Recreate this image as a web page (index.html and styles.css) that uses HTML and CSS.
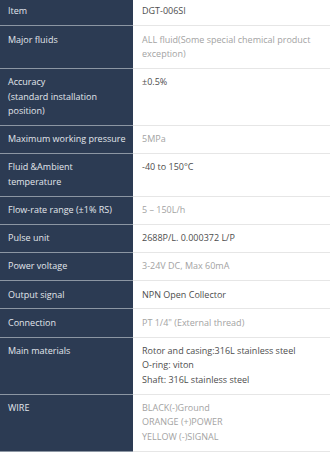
FILE: index.html
```html
<!DOCTYPE html>
<html lang="en">
<head>
<meta charset="utf-8">
<title>Spec</title>
<link rel="stylesheet" href="styles.css">
</head>
<body>
<div class="spec">
  <div class="k">Item</div><div class="v dark">DGT-006SI</div>
  <div class="k">Major fluids</div><div class="v light">ALL fluid(Some special chemical product exception)</div>
  <div class="k">Accuracy<br>(standard installation position)</div><div class="v dark">±0.5%</div>
  <div class="k">Maximum working pressure</div><div class="v light">5MPa</div>
  <div class="k">Fluid &amp;Ambient temperature</div><div class="v dark">-40 to 150°C</div>
  <div class="k">Flow-rate range (±1% RS)</div><div class="v light">5 – 150L/h</div>
  <div class="k">Pulse unit</div><div class="v dark">2688P/L. 0.000372 L/P</div>
  <div class="k">Power voltage</div><div class="v light">3-24V DC, Max 60mA</div>
  <div class="k">Output signal</div><div class="v dark">NPN Open Collector</div>
  <div class="k">Connection</div><div class="v light">PT 1/4" (External thread)</div>
  <div class="k">Main materials</div><div class="v dark">Rotor and casing:316L stainless steel<br>O-ring: viton<br>Shaft: 316L stainless steel</div>
  <div class="k">WIRE</div><div class="v light">BLACK(-)Ground<br>ORANGE (+)POWER<br>YELLOW (-)SIGNAL</div>
</div>
</body>
</html>
```
FILE: styles.css
```css
html, body {
  margin: 0;
  padding: 0;
  background: #ffffff;
}
body {
  font-family: "Open Sans", "Noto Sans", "DejaVu Sans", sans-serif;
  font-size: 9px;
  line-height: 14.4px;
  overflow: hidden;
}
.spec {
  display: grid;
  grid-template-columns: 133px 1fr;
  margin-top: -2px;
}
.k {
  background: #2c3b53;
  color: #e2e6ec;
  padding: 6.4px 6px 6.4px 8px;
  border-bottom: 1px solid #8c96a3;
}
.v {
  padding: 6.4px 8px 6.4px 9px;
  border-bottom: 1px solid #e6e6e6;
}
.dark { color: #4d4d4d; }
.light { color: #a3a3a3; }
```
